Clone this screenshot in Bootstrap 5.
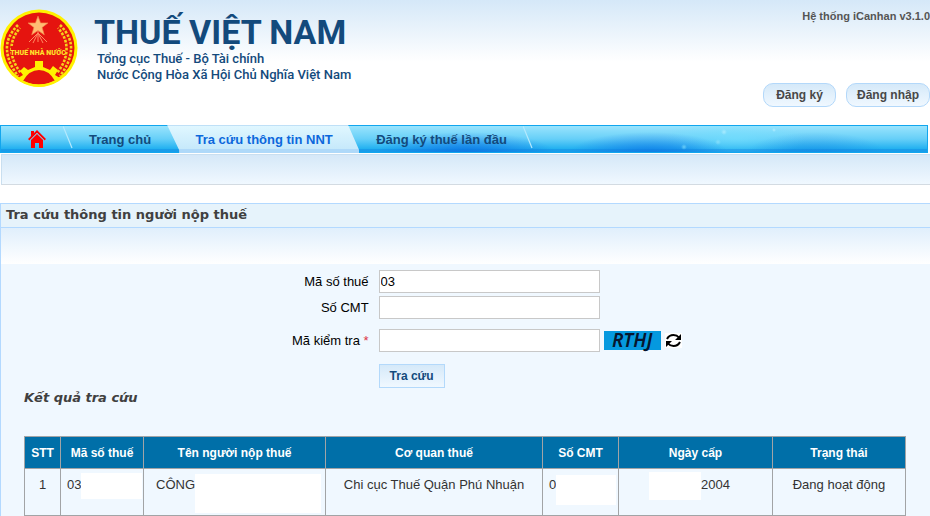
<!DOCTYPE html>
<html lang="vi">
<head>
<meta charset="utf-8">
<meta name="viewport" content="width=device-width, initial-scale=1">
<title>Thuế Việt Nam - Tra cứu thông tin người nộp thuế</title>
<link href="https://cdn.jsdelivr.net/npm/bootstrap@5.3.0/dist/css/bootstrap.min.css" rel="stylesheet">
<style>
  body { font: 13px/20px "Liberation Sans", Arial, sans-serif; color: #333; background: #fff; min-height: 100vh; }
  .site-header { min-height: 125px; background: linear-gradient(#d5e8f8, #fff 62px); }
  .emblem { width: 78px; height: 78px; margin-top: 9px; }
  .brand-text { color: #134a7c; font-family: Roboto, sans-serif; padding: 13px 0 0 16px; }
  .brand-title { font-size: 34px; line-height: 38px; font-weight: 700; margin: 0; }
  .brand-sub { font-size: 13px; line-height: 16px; font-weight: 500; padding-left: 3px; margin: 0; }
  .version { font-size: 11px; line-height: 16px; font-weight: 700; color: #555; padding-top: 8px; }
  .account-list { gap: 10px; margin-bottom: 18px; }
  .account-btn { min-width: 73px; height: 24px; padding: 0 10px; border: 1px solid #b3d8fa; border-radius: 10px; background: linear-gradient(#d5e9f9, #f0f8ff); color: #484848; font-size: 12px; line-height: 20px; font-weight: 700; }
  .main-menu { height: 28px; margin-right: 2px; border: 1px solid #12a6ee; font-size: 13px; font-weight: 700;
    background:
      linear-gradient(transparent 23px, #0d78dd55 23px),
      radial-gradient(circle at 723px 6px, #b3eeffcc, transparent 3px),
      radial-gradient(circle at 717px 16px, #8fe1fbcc, transparent 3px),
      radial-gradient(circle at 683px 21px, #78d8fbcc, transparent 3px),
      radial-gradient(circle at 773px 4px, #bdf0ffcc, transparent 2px),
      radial-gradient(ellipse 90px 22px at 465px 28px, #0766e2cc, transparent),
      radial-gradient(ellipse 80px 22px at 648px 28px, #0c6ee5bb, transparent),
      radial-gradient(ellipse 70px 22px at 815px 28px, #1685e388, transparent),
      radial-gradient(ellipse 70px 20px at 735px 12px, #74e1ff99, transparent),
      linear-gradient(#9ae4fd, #66cff8 50%, #1eaff0 90%); }
  .main-menu a { color: #134a7c; line-height: 30px; text-decoration: none; height: 28px; margin-top: -1px; }
  .main-menu .home-tab { width: 62px; padding-left: 9px; }
  .main-menu .active-tab { color: #0c68dc; width: 192px; padding-left: 2px;
    clip-path: polygon(0 0, 181px 0, 192px 25px, 192px 28px, 12px 28px, 12px 25px); background: linear-gradient(#bfe0f7 1px, #e0f7ff 1px, #c6e9fb 24px, #afd9f9 24px); }
  .main-menu .after-active { padding: 0 16px 0 17px; }
  .tab-line { width: 10px; height: 23px; flex: none; }
  .submenu { height: 31px; margin: 1px 0 0 1px; border: 1px solid #c9dff0; border-right: 0; border-bottom-color: #d3dbe2; background: linear-gradient(#d5e8f8, #f0f8ff); }
  .lookup-panel { margin-top: 18px; border: 1px solid #b3d9ff; border-width: 1px 0 0 1px; background: #f0f8ff; }
  .lookup-panel h1, .lookup-panel h2 { font: bold 13px/20px "DejaVu Sans", Verdana, sans-serif; color: #404040; margin: 0; }
  .lookup-panel h1 { padding: 1px 0 0 5px; height: 24px; background: #e6f3fb; border-bottom: 1px solid #b3d9ff; }
  .lookup-panel h2 { padding: 0 23px; font-style: italic; }
  .panel-fade { height: 36px; background: linear-gradient(#e0effc, #fff); }
  .lookup-form { padding-top: 6px; color: #000; }
  .form-line { margin-bottom: 3px; }
  .form-line-wide { margin-bottom: 10px; }
  .button-line { padding-top: 12px; }
  .field-label { width: 40%; padding-right: 4px; line-height: 23px; text-align: right; }
  .text-field { width: 221px; height: 23px; margin-left: 6px; padding: 0 1px; border: 1px solid #c8c8c8; background: #fff; color: #000; }
  .captcha { width: 57px; height: 19px; margin-left: 4px; background: #0599df; color: #06162f; font: italic 600 19px/19px "Noto Sans", sans-serif; text-align: center; }
  .reload { width: 17px; height: 15px; margin-left: 4px; }
  .search-btn { height: 24px; padding: 0 10px; margin-left: 6px; border: 1px solid #b3d9fb; background: linear-gradient(#d5e9f9, #f0f8ff); color: #134a7c; font-size: 12px; line-height: 20px; font-weight: 700; }
  .result-area { padding: 28px 24px 1px 23px; }
  .result-table { width: 100%; table-layout: fixed; border-collapse: collapse; }
  .result-table th, .result-table td { border: 1px solid #a2a4a6; }
  .result-table th { height: 32px; background: #006fa8; color: #fff; text-align: center; padding: 0; font-size: 12px; font-weight: 700; }
  .result-table td { height: 47px; padding: 6px 6px 1px; vertical-align: top; text-align: center; }
  .result-table td.masked { padding-right: 0; }
  .result-table td.name-cell { padding-left: 12px; }
  .result-table td.date-cell { padding-right: 18px; }
  .c-no { width: 36px; } .c-tax { width: 83px; } .c-name { width: 182px; } .c-office { width: 217px; }
  .c-id { width: 76px; } .c-date { width: 154px; } .c-state { width: 133px; }
  .blank { background: #fff; flex: none; }
  .blank-tax { width: 61px; height: 26px; margin-top: -2px; }
  .blank-name { width: 126px; height: 39px; margin-top: -1px; }
  .blank-id { width: 60px; height: 30px; }
  .blank-date { width: 52px; height: 28px; margin-top: -3px; }
</style>
<script src="https://cdn.jsdelivr.net/npm/bootstrap@5.3.0/dist/js/bootstrap.bundle.min.js"></script>
</head>
<body class="d-flex flex-column">
<header class="site-header d-flex justify-content-between">
  <div class="d-flex">
    <svg class="emblem" viewBox="0 0 78 78" role="img" aria-label="Thuế Nhà Nước">
      <circle cx="39" cy="39" r="38.500" fill="#fff200"/>
      <circle cx="39" cy="39" r="35.500" fill="#e5140f"/>
      <g fill="none" stroke="#f6d21b" stroke-width="2.600" stroke-dasharray="2.600 1.400">
        <path d="M18 16Q6 28 7 41T18 67"/><path d="M60 16Q72 28 71 41T60 67"/>
        <path d="M20 19Q11 29 11.500 41T21 64" stroke-dashoffset="2"/><path d="M58 19Q67 29 66.500 41T57 64" stroke-dashoffset="2"/>
      </g>
      <path d="M38 14v19M38 24 29 33M38 24l9 9M38 24 33 34M38 24l5 10" stroke="#ff8a62" stroke-width="1"/>
      <path d="M38 6.500l2.300 6.200h6.700l-5.300 4.100 2 6.700-5.700-4-5.700 4 2-6.700-5.300-4.100h6.700z" transform="translate(-3.800 0) scale(1.100)" fill="#ffbd73" stroke="#f48b4c" stroke-width=".6"/>
      <path d="M18 69l5-3-3-4 4-4 4 3 7-3v-6h8v6l7 3 3-4 5 4-3 5 5 3Q50 78 39 77.500 27 78 18 69z" fill="#fff200"/>
      <path d="M23 72Q29 61 39 61t16 11Q39 79 23 72z" fill="#e5140f"/>
      <path d="M17 68Q38 83 61 68l-2 4Q39 84 19 72z" fill="#fff200"/>
      <rect x="11" y="37" width="54" height="10" fill="#e5140f"/>
      <text x="38" y="46" text-anchor="middle" font-family="Roboto, sans-serif" font-size="7" font-weight="900" fill="#ffe32b">THUẾ NHÀ NƯỚC</text>
    </svg>
    <div class="brand-text">
      <p class="brand-title">THUẾ VIỆT NAM</p>
      <p class="brand-sub">Tổng cục Thuế - Bộ Tài chính</p>
      <p class="brand-sub">Nước Cộng Hòa Xã Hội Chủ Nghĩa Việt Nam</p>
    </div>
  </div>
  <div class="d-flex flex-column align-items-end">
    <span class="version">Hệ thống iCanhan v3.1.0</span>
    <div class="account-list d-flex mt-auto">
      <button type="button" class="account-btn">Đăng ký</button>
      <button type="button" class="account-btn">Đăng nhập</button>
    </div>
  </div>
</header>
<nav class="main-menu d-flex flex-shrink-0" aria-label="Menu chính">
  <a class="home-tab d-flex align-items-center justify-content-center" href="#" aria-label="Trang đầu">
    <svg width="18" height="18" viewBox="0 0 18 18" fill="#f00"><path d="M0 9 9 0l9 9-1.500 1.500L9 3 1.500 10.500zM3 1h3v3L3 7zM3 10l6-6 6 6v8h-4v-5H7v5H3z"/><path d="M1.500 10.500 9 3l7.500 7.500" fill="none" stroke="#9fb9d8" stroke-width=".7"/></svg>
  </a>
  <svg class="tab-line" viewBox="0 0 10 23"><path d="M0 0l9 22" stroke="#b5e9fd" stroke-width="1.200"/></svg>
  <a class="px-3" href="#">Trang chủ</a>
  <a class="active-tab d-flex justify-content-center" href="#" aria-current="page">Tra cứu thông tin NNT</a>
  <a class="after-active" href="#">Đăng ký thuế lần đầu</a>
  <svg class="tab-line" viewBox="0 0 10 23"><path d="M0 0l9 22" stroke="#b5e9fd" stroke-width="1.200"/></svg>
</nav>
<div class="submenu flex-shrink-0"></div>
<main class="lookup-panel flex-grow-1">
  <h1>Tra cứu thông tin người nộp thuế</h1>
  <div class="panel-fade"></div>
  <form class="lookup-form">
    <div class="form-line d-flex">
      <label class="field-label" for="taxId">Mã số thuế</label>
      <input class="text-field" id="taxId" type="text" value="03">
    </div>
    <div class="form-line-wide d-flex">
      <label class="field-label" for="idCard">Số CMT</label>
      <input class="text-field" id="idCard" type="text">
    </div>
    <div class="d-flex align-items-center">
      <label class="field-label" for="code">Mã kiểm tra <span class="text-danger">*</span></label>
      <input class="text-field" id="code" type="text">
      <span class="captcha">RTHJ</span>
      <button type="button" class="reload d-flex border-0 p-0 bg-white" aria-label="Đổi mã">
        <svg width="17" height="15" viewBox="0 0 17 15" fill="none" stroke="#000" stroke-width="2"><path d="M2 6Q4 2 8.500 2 12 2 14 4.500M15 9Q13 13 8.500 13 5 13 3 10.500"/><path d="M16 1v6h-6zM1 14V8h6z" fill="#000" stroke="none"/></svg>
      </button>
    </div>
    <div class="button-line d-flex">
      <span class="field-label"></span>
      <button type="button" class="search-btn">Tra cứu</button>
    </div>
  </form>
  <h2>Kết quả tra cứu</h2>
  <div class="result-area">
    <table class="result-table">
      <colgroup><col class="c-no"><col class="c-tax"><col class="c-name"><col class="c-office"><col class="c-id"><col class="c-date"><col class="c-state"></colgroup>
      <thead><tr><th>STT</th><th>Mã số thuế</th><th>Tên người nộp thuế</th><th>Cơ quan thuế</th><th>Số CMT</th><th>Ngày cấp</th><th>Trạng thái</th></tr></thead>
      <tbody><tr>
        <td>1</td>
        <td class="masked"><div class="d-flex">03<span class="blank blank-tax"></span></div></td>
        <td class="masked name-cell"><div class="d-flex">CÔNG<span class="blank blank-name"></span></div></td>
        <td>Chi cục Thuế Quận Phú Nhuận</td>
        <td class="masked"><div class="d-flex">0<span class="blank blank-id"></span></div></td>
        <td class="date-cell"><div class="d-flex justify-content-center"><span class="blank blank-date"></span>2004</div></td>
        <td>Đang hoạt động</td>
      </tr></tbody>
    </table>
  </div>
</main>
</body>
</html>
